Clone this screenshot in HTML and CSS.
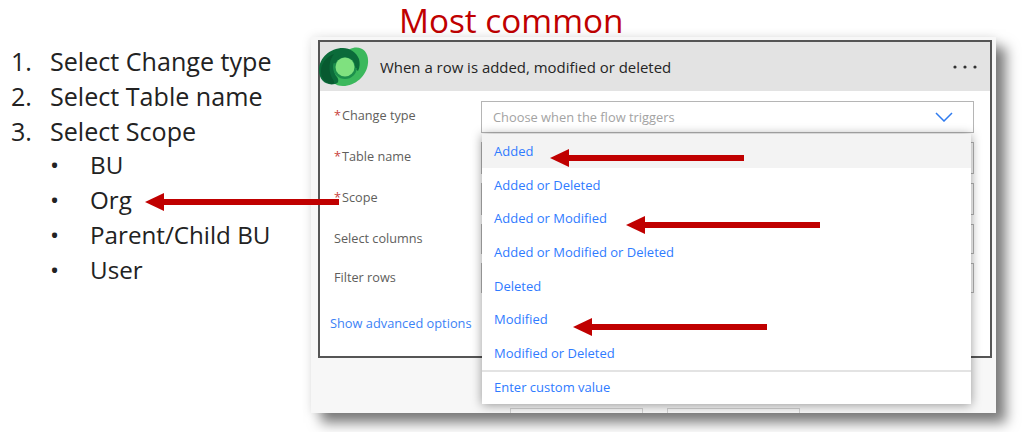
FILE: index.html
```html
<!DOCTYPE html>
<html lang="en">
<head>
    <meta charset="UTF-8">
    <meta name="viewport" content="width=device-width, initial-scale=1.0">
    <title>When a row is added, modified or deleted</title>
    <link rel="stylesheet" href="styles.css">
</head>
<body>
    <div class="slide">
        <div class="steps">
            <div class="step"><span class="step-num">1.</span>Select Change type</div>
            <div class="step"><span class="step-num">2.</span>Select Table name</div>
            <div class="step"><span class="step-num">3.</span>Select Scope</div>
            <div class="sub-step"><span class="bullet">•</span>BU</div>
            <div class="sub-step"><span class="bullet">•</span>Org</div>
            <div class="sub-step"><span class="bullet">•</span>Parent/Child BU</div>
            <div class="sub-step"><span class="bullet">•</span>User</div>
        </div>

        <div class="right">
            <h1 class="heading">Most common</h1>
            <div class="panel">
                <div class="card">
                    <div class="card-header">
                        <svg class="logo" viewBox="0 0 52 40" width="52" height="40">
                            <path fill="#3bb85c" d="M35 1C44-1 51 5 50 16C49 29 37 39 25 39C17 39 12 34 8 28L22 10C26 6 30 2 35 1Z"/>
                            <path fill="#0b6b3a" d="M1 23C1 11 12 1 25 1C32 1 38 5 41 12C42 16 42 20 40 24L35 20C33 14 27 11 21 13C15 18 15 26 19 30C21 33 21 36 17 37C8 39 1 33 1 23Z"/>
                            <path fill="#075a30" d="M3 24C3 16 9 9 16 7C11 13 10 23 14 31C16 34 17 36 15 37C8 37 3 32 3 24Z"/>
                            <circle cx="27" cy="20" r="12" fill="#1c8f4c"/>
                            <path fill="none" stroke="#0b6b3a" stroke-width="3" d="M16 16A12 12 0 0 1 39 21"/>
                            <circle cx="27" cy="20" r="9.5" fill="#7fe17f"/>
                        </svg>
                        <span class="card-title">When a row is added, modified or deleted</span>
                        <svg class="more" viewBox="0 0 24 4" width="24" height="4">
                            <circle cx="2" cy="2" r="1.6"/>
                            <circle cx="12" cy="2" r="1.6"/>
                            <circle cx="22" cy="2" r="1.6"/>
                        </svg>
                    </div>

                    <div class="form">
                        <div class="row">
                            <label class="field-label"><span class="req">*</span>Change type</label>
                            <div class="input">
                                <span class="placeholder">Choose when the flow triggers</span>
                                <svg class="chevron" viewBox="0 0 18 10" width="18" height="10">
                                    <path d="M1 1L9 9L17 1"/>
                                </svg>
                            </div>
                        </div>
                        <div class="row">
                            <label class="field-label"><span class="req">*</span>Table name</label>
                            <div class="input"></div>
                        </div>
                        <div class="row">
                            <label class="field-label"><span class="req">*</span>Scope</label>
                            <div class="input"></div>
                        </div>
                        <div class="row row-short">
                            <label class="field-label">Select columns</label>
                            <div class="input"></div>
                        </div>
                        <div class="row row-short">
                            <label class="field-label">Filter rows</label>
                            <div class="input"></div>
                        </div>
                        <a class="advanced">Show advanced options</a>
                    </div>

                    <!-- Change type dropdown -->
                    <div class="dropdown">
                        <div class="option option-hover">Added</div>
                        <div class="option">Added or Deleted</div>
                        <div class="option">Added or Modified</div>
                        <div class="option">Added or Modified or Deleted</div>
                        <div class="option">Deleted</div>
                        <div class="option">Modified</div>
                        <div class="option">Modified or Deleted</div>
                        <div class="option option-custom">Enter custom value</div>
                    </div>
                </div>

                <div class="below">
                    <div class="below-box"></div>
                    <div class="below-box"></div>
                </div>
            </div>
        </div>

        <!-- Callout arrows -->
        <div class="arrow arrow-org"></div>
        <div class="arrow arrow-added"></div>
        <div class="arrow arrow-modified-1"></div>
        <div class="arrow arrow-modified-2"></div>
    </div>
</body>
</html>
```

FILE: styles.css
```css
* {
    box-sizing: border-box;
}
body {
    margin: 0;
    background: white;
    font-family: "Open Sans", "Noto Sans", sans-serif;
}
.slide {
    position: relative;
    display: flex;
    width: 1022px;
    height: 432px;
    overflow: hidden;
}

/* Left list */
.steps {
    width: 311px;
    padding: 44px 0 0 11px;
    font-size: 25.1px;
    line-height: 34.8px;
    color: #222;
}
.step {
    display: flex;
}
.step-num {
    width: 39px;
}
.sub-step {
    display: flex;
    margin-left: 39px;
    font-size: 24.2px;
}
.bullet {
    width: 40px;
}

/* Right side */
.right {
    width: 685px;
}
.heading {
    height: 41px;
    margin: 0 0 -4px 88px;
    font-size: 33.3px;
    font-weight: 400;
    line-height: 41px;
    color: #c00000;
}
.panel {
    position: relative;
    height: 376px;
    padding: 3px 0 0 7px;
    overflow: hidden;
    background: #f7f7f7;
    box-shadow: 10px 10px 12px rgba(0, 0, 0, 0.5), 0 0 10px rgba(0, 0, 0, 0.1);
}
.card {
    position: relative;
    width: 674px;
    height: 318px;
    background: white;
    border: 2px solid #555;
}
.card-header {
    display: flex;
    align-items: center;
    height: 49px;
    background: #e3e3e3;
}
.logo {
    flex: none;
    margin-left: -2px;
}
.card-title {
    margin-left: 10px;
    font-size: 14.95px;
    color: #252525;
}
.more {
    margin-left: auto;
    margin-right: 13px;
    fill: #333;
}

/* Form */
.form {
    padding: 10px 16px 0 14px;
}
.row {
    display: flex;
    align-items: center;
    height: 32px;
    margin-bottom: 9px;
}
.row-short {
    height: 30px;
}
.field-label {
    width: 147px;
    padding-bottom: 5px;
    font-size: 12.7px;
    color: #605e5c;
}
.row-short .field-label {
    padding-bottom: 2px;
}
.req {
    margin-right: 1px;
    color: #c8423c;
}
.input {
    display: flex;
    align-items: center;
    justify-content: space-between;
    flex: 1;
    height: 100%;
    padding: 0 20px 0 11px;
    border: 1px solid #b5b5b5;
}
.placeholder {
    font-size: 12.85px;
    color: #a3a3a3;
}
.chevron {
    fill: none;
    stroke: #2f7bef;
    stroke-width: 1.5;
}
.advanced {
    display: block;
    margin: 22px 0 0 -4px;
    font-size: 12.8px;
    line-height: 16px;
    color: #3b82f6;
}

/* Dropdown */
.dropdown {
    position: absolute;
    top: 92px;
    left: 162px;
    width: 489px;
    height: 270px;
    background: white;
    box-shadow: 0 1px 10px rgba(0, 0, 0, 0.4);
}
.option {
    height: 33.7px;
    padding-left: 12px;
    font-size: 13px;
    line-height: 34.5px;
    color: #2f7bff;
}
.option-hover {
    background: #f3f3f3;
}
.option-custom {
    height: 34px;
    border-top: 2px solid #e3e3e3;
    line-height: 31px;
}

.below {
    display: flex;
    gap: 24px;
    margin: 50px 0 0 192px;
}
.below-box {
    width: 133px;
    height: 10px;
    border: 1px solid #d0d0d0;
}

/* Arrows */
.arrow {
    position: absolute;
    height: 6px;
    width: 175px;
    background: #c00000;
}
.arrow::before {
    content: "";
    position: absolute;
    top: -6px;
    left: -19px;
    border-style: solid;
    border-width: 9px 19px 9px 0;
    border-color: transparent #c00000 transparent transparent;
}
.arrow-org {
    top: 199px;
    left: 164px;
}
.arrow-added {
    top: 155px;
    left: 569px;
}
.arrow-modified-1 {
    top: 222px;
    left: 645px;
}
.arrow-modified-2 {
    top: 324px;
    left: 592px;
}
```
